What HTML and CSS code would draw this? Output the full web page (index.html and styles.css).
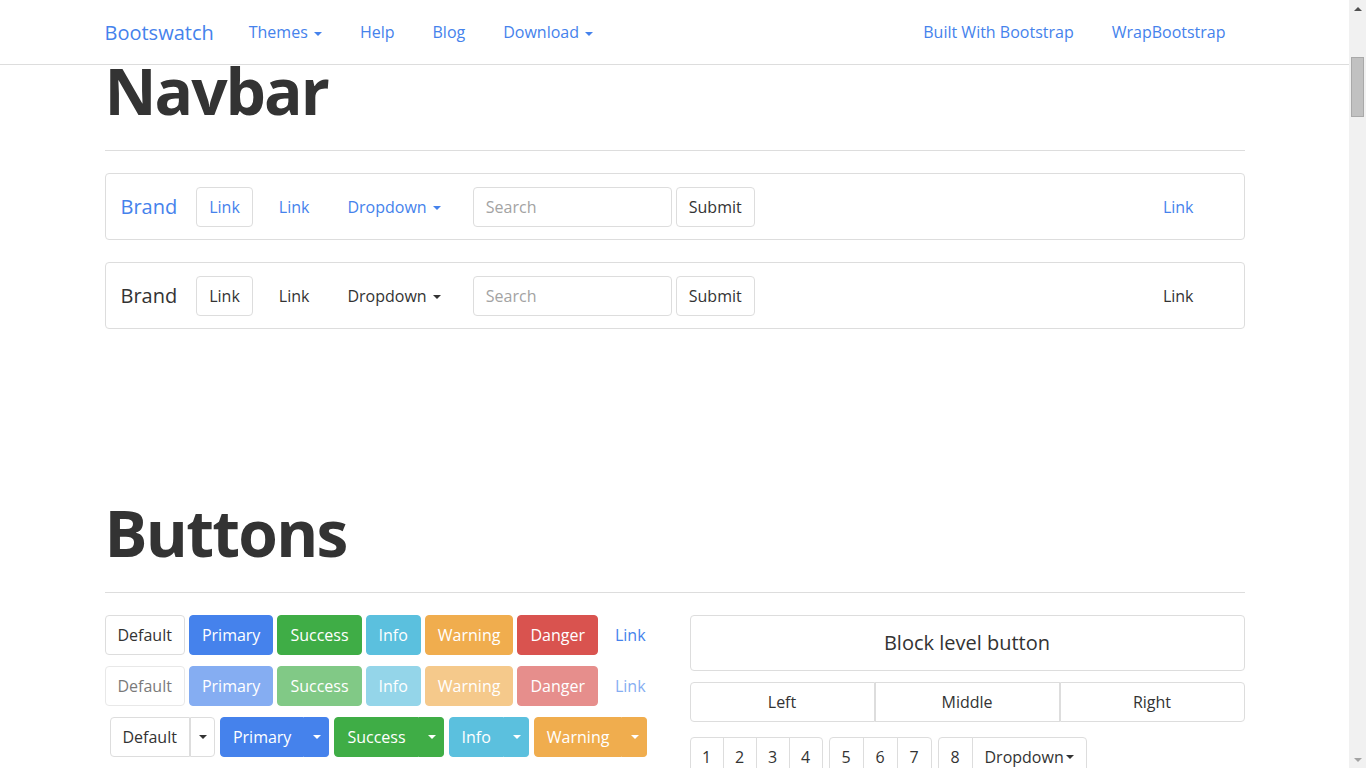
FILE: index.html
```html
<!DOCTYPE html>
<html lang="en">
<head>
<meta charset="utf-8">
<title>Bootswatch: Readable</title>
<link rel="stylesheet" href="styles.css">
</head>
<body>
<div class="page">
  <header class="topnav">
    <div class="topnav-inner">
      <a class="topnav-brand" href="#">Bootswatch</a>
      <ul class="topnav-links">
        <li><a href="#">Themes <span class="caret"></span></a></li>
        <li><a href="#">Help</a></li>
        <li><a href="#">Blog</a></li>
        <li><a href="#">Download <span class="caret"></span></a></li>
      </ul>
      <ul class="topnav-links topnav-right">
        <li><a href="#">Built With Bootstrap</a></li>
        <li><a href="#">WrapBootstrap</a></li>
      </ul>
    </div>
  </header>

  <main class="container">
    <section class="docs-section first">
      <div class="page-header"><h1>Navbar</h1></div>

      <nav class="demo-nav">
        <a class="demo-brand" href="#">Brand</a>
        <a class="demo-link active" href="#">Link</a>
        <a class="demo-link plain" href="#">Link</a>
        <a class="demo-link dropdown" href="#">Dropdown <span class="caret"></span></a>
        <form class="demo-form">
          <input class="demo-input" type="text" placeholder="Search">
          <button class="btn btn-default" type="button">Submit</button>
        </form>
        <a class="demo-link right" href="#">Link</a>
      </nav>

      <nav class="demo-nav inverse">
        <a class="demo-brand" href="#">Brand</a>
        <a class="demo-link active" href="#">Link</a>
        <a class="demo-link plain" href="#">Link</a>
        <a class="demo-link dropdown" href="#">Dropdown <span class="caret"></span></a>
        <form class="demo-form">
          <input class="demo-input" type="text" placeholder="Search">
          <button class="btn btn-default" type="button">Submit</button>
        </form>
        <a class="demo-link right" href="#">Link</a>
      </nav>
    </section>

    <section class="docs-section second">
      <div class="page-header"><h1 class="h-buttons">Buttons</h1></div>

      <div class="cols">
        <div class="col">
          <div class="btn-row">
            <a class="btn btn-default" href="#">Default</a>
            <a class="btn btn-primary" href="#">Primary</a>
            <a class="btn btn-success" href="#">Success</a>
            <a class="btn btn-info" href="#">Info</a>
            <a class="btn btn-warning" href="#">Warning</a>
            <a class="btn btn-danger" href="#">Danger</a>
            <a class="btn btn-link" href="#">Link</a>
          </div>
          <div class="btn-row disabled">
            <a class="btn btn-default" href="#">Default</a>
            <a class="btn btn-primary" href="#">Primary</a>
            <a class="btn btn-success" href="#">Success</a>
            <a class="btn btn-info" href="#">Info</a>
            <a class="btn btn-warning" href="#">Warning</a>
            <a class="btn btn-danger" href="#">Danger</a>
            <a class="btn btn-link" href="#">Link</a>
          </div>
          <div class="btn-row split-row">
            <div class="btn-group">
              <a class="btn btn-default main" href="#">Default</a>
              <a class="btn btn-default tog" href="#"><span class="caret"></span></a>
            </div>
            <div class="btn-group">
              <a class="btn btn-primary main" href="#">Primary</a>
              <a class="btn btn-primary tog" href="#"><span class="caret"></span></a>
            </div>
            <div class="btn-group">
              <a class="btn btn-success main" href="#">Success</a>
              <a class="btn btn-success tog" href="#"><span class="caret"></span></a>
            </div>
            <div class="btn-group">
              <a class="btn btn-info main" href="#">Info</a>
              <a class="btn btn-info tog" href="#"><span class="caret"></span></a>
            </div>
            <div class="btn-group">
              <a class="btn btn-warning main" href="#">Warning</a>
              <a class="btn btn-warning tog" href="#"><span class="caret"></span></a>
            </div>
          </div>
        </div>

        <div class="col">
          <a class="btn btn-default btn-block" href="#">Block level button</a>
          <div class="btn-justified">
            <a class="btn btn-default" href="#">Left</a>
            <a class="btn btn-default" href="#">Middle</a>
            <a class="btn btn-default" href="#">Right</a>
          </div>
          <div class="toolbar">
            <div class="btn-group joined">
              <a class="btn btn-default num" href="#">1</a>
              <a class="btn btn-default num" href="#">2</a>
              <a class="btn btn-default num" href="#">3</a>
              <a class="btn btn-default num" href="#">4</a>
            </div>
            <div class="btn-group joined">
              <a class="btn btn-default num wide" href="#">5</a>
              <a class="btn btn-default num wide" href="#">6</a>
              <a class="btn btn-default num wide" href="#">7</a>
            </div>
            <div class="btn-group joined">
              <a class="btn btn-default num wide" href="#">8</a>
              <a class="btn btn-default" href="#">Dropdown <span class="caret"></span></a>
            </div>
          </div>
        </div>
      </div>
    </section>
  </main>
</div>

<div class="scrollbar" aria-hidden="true">
  <div class="sb-arrow up"></div>
  <div class="sb-track">
    <div class="sb-thumb"></div>
  </div>
  <div class="sb-arrow down"></div>
</div>
</body>
</html>
```

FILE: styles.css
```css
html, body {
  margin: 0;
  padding: 0;
  height: 100%;
  overflow: hidden;
}

body {
  display: flex;
  font-family: "Open Sans", "Liberation Sans", sans-serif;
  font-size: 16px;
  color: #333333;
  background: #ffffff;
}

a {
  color: #4582ec;
  text-decoration: none;
}

ul {
  list-style: none;
  margin: 0;
  padding: 0;
}

.caret {
  display: inline-block;
  width: 0;
  height: 0;
  margin-left: 2px;
  vertical-align: middle;
  border-top: 4px solid;
  border-left: 4px solid transparent;
  border-right: 4px solid transparent;
}

.page {
  flex: 1;
  min-width: 0;
  height: 100%;
  overflow: hidden;
  display: flex;
  flex-direction: column;
}

/* ---------- top navbar ---------- */
.topnav {
  flex: none;
  height: 64px;
  background: #ffffff;
  border-bottom: 1px solid #dddddd;
}

.topnav-inner {
  width: 1140px;
  margin: 0 auto;
  height: 64px;
  display: flex;
  align-items: center;
}

.topnav-brand {
  font-size: 20px;
  margin-right: 16px;
}

.topnav-links {
  display: flex;
}

.topnav-links a {
  display: block;
  padding: 0 19px;
  font-size: 16px;
}

.topnav-right {
  margin-left: auto;
}

.topnav-right li:last-child a {
  padding-right: 19px;
}

/* ---------- main ---------- */
.container {
  flex: 1;
  width: 1140px;
  margin: 0 auto;
}

.docs-section.second {
  margin-top: 178px;
}

.page-header {
  border-bottom: 1px solid #dddddd;
  padding-bottom: 33px;
  margin-bottom: 22px;
}

.page-header h1 {
  margin: 0;
  font-size: 64px;
  line-height: 52px;
  font-weight: 700;
  letter-spacing: -2px;
  color: #333333;
}

.page-header h1.h-buttons {
  letter-spacing: -1.7px;
}

/* ---------- demo navbars ---------- */
.demo-nav {
  height: 65px;
  border: 1px solid #dddddd;
  border-radius: 4px;
  display: flex;
  align-items: center;
  padding-left: 15px;
  margin-bottom: 22px;
}

.demo-nav:last-child {
  margin-bottom: 0;
}

.demo-brand {
  font-size: 20px;
  margin-right: 19px;
}

.demo-link {
  font-size: 16px;
}

.demo-link.active {
  height: 40px;
  box-sizing: border-box;
  display: flex;
  align-items: center;
  padding: 0 12px;
  border: 1px solid #dddddd;
  border-radius: 4px;
}

.demo-link.plain {
  margin-left: 26px;
}

.demo-link.dropdown {
  margin-left: 38px;
}

.demo-link.right {
  margin-left: auto;
  margin-right: 50px;
}

.demo-form {
  display: flex;
  margin: 0 0 0 32px;
}

.demo-input {
  width: 199px;
  height: 40px;
  box-sizing: border-box;
  border: 1px solid #dddddd;
  border-radius: 4px;
  padding: 0 12px;
  font-family: inherit;
  font-size: 16px;
  color: #333333;
  margin-right: 4px;
  outline: none;
}

.demo-input::placeholder {
  color: #a3a3a3;
}

.demo-nav.inverse .demo-brand,
.demo-nav.inverse .demo-link {
  color: #333333;
}

/* ---------- buttons ---------- */
.btn {
  display: inline-flex;
  align-items: center;
  justify-content: center;
  box-sizing: border-box;
  height: 40px;
  padding: 0 12px;
  border: 1px solid transparent;
  border-radius: 4px;
  font-family: inherit;
  font-size: 16px;
  line-height: 1;
  white-space: nowrap;
  cursor: pointer;
}

.btn-default {
  background: #ffffff;
  border-color: #dddddd;
  color: #333333;
}

.btn-primary {
  background: #4582ec;
  border-color: #4582ec;
  color: #ffffff;
}

.btn-success {
  background: #3fad46;
  border-color: #3fad46;
  color: #ffffff;
}

.btn-info {
  background: #5bc0de;
  border-color: #5bc0de;
  color: #ffffff;
}

.btn-warning {
  background: #f0ad4e;
  border-color: #f0ad4e;
  color: #ffffff;
}

.btn-danger {
  background: #d9534f;
  border-color: #d9534f;
  color: #ffffff;
}

.btn-link {
  background: transparent;
  color: #4582ec;
  padding: 0 12px;
}

.cols {
  display: grid;
  grid-template-columns: 555px 555px;
  column-gap: 30px;
}

.btn-row {
  display: flex;
  gap: 4px;
  margin-bottom: 11px;
}

.btn-row.disabled .btn {
  opacity: 0.65;
}

.split-row {
  gap: 5px;
  padding-left: 5px;
}

.btn-group {
  display: inline-flex;
}

.btn-group .main {
  border-top-right-radius: 0;
  border-bottom-right-radius: 0;
  padding: 0 12px;
}

.btn-group .tog {
  border-top-left-radius: 0;
  border-bottom-left-radius: 0;
  border-left-width: 0;
  padding: 0 8px;
  width: 25px;
}

.btn-group .btn-default.tog {
  border-left-width: 1px;
}

.btn-block {
  display: flex;
  width: 100%;
  height: 56px;
  font-size: 20px;
  margin-bottom: 11px;
}

.btn-justified {
  display: flex;
  margin-bottom: 15px;
}

.btn-justified .btn {
  flex: 1;
  border-radius: 0;
}

.btn-justified .btn:first-child {
  border-radius: 4px 0 0 4px;
}

.btn-justified .btn:last-child {
  border-radius: 0 4px 4px 0;
}

.toolbar {
  display: flex;
  gap: 6px;
}

.btn-group.joined .btn {
  border-radius: 0;
  margin-left: -1px;
}

.btn-group.joined .btn:first-child {
  margin-left: 0;
  border-radius: 4px 0 0 4px;
}

.btn-group.joined .btn:last-child {
  border-radius: 0 4px 4px 0;
}

.btn.num {
  width: 34px;
  padding: 0;
}

.btn.num.wide {
  width: 35px;
}

/* ---------- scrollbar ---------- */
.scrollbar {
  flex: none;
  width: 17px;
  height: 100%;
  background: #f1f1f1;
  display: flex;
  flex-direction: column;
}

.sb-arrow {
  flex: none;
  height: 17px;
  display: flex;
  align-items: center;
  justify-content: center;
}

.sb-arrow::before {
  content: "";
  width: 0;
  height: 0;
  border-left: 4px solid transparent;
  border-right: 4px solid transparent;
}

.sb-arrow.up::before {
  border-bottom: 4px solid #505050;
}

.sb-arrow.down::before {
  border-top: 4px solid #a3a3a3;
}

.sb-track {
  flex: 1;
  padding-top: 40px;
}

.sb-thumb {
  width: 13px;
  height: 60px;
  margin-left: 2px;
  box-sizing: border-box;
  background: #c1c1c1;
  border: 1px solid #a9a9a9;
}
```
